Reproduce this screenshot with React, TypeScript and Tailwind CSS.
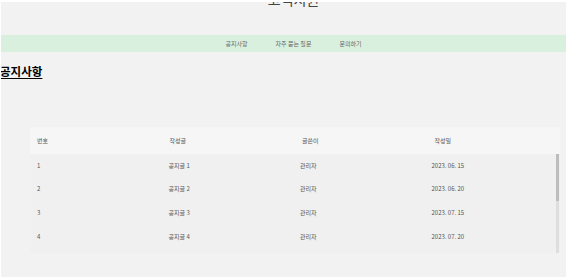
import React from "react";

const rows = [
  ["1", "공지글 1", "관리자", "2023. 06. 15"],
  ["2", "공지글 2", "관리자", "2023. 06. 20"],
  ["3", "공지글 3", "관리자", "2023. 07. 15"],
  ["4", "공지글 4", "관리자", "2023. 07. 20"],
  ["5", "공지글 5", "관리자", "2023. 08. 15"],
  ["6", "공지글 6", "관리자", "2023. 08. 20"],
  ["7", "공지글 7", "관리자", "2023. 09. 15"],
  ["8", "공지글 8", "관리자", "2023. 09. 20"],
];

export default function App() {
  return (
    <div
      className="w-[569px] h-[280px] bg-white overflow-hidden"
      style={{ fontFamily: '"Noto Sans CJK KR", "Noto Sans", sans-serif' }}
    >
      <div className="ml-[1px] mt-[2px] w-[565px] h-[275px] bg-[#f2f2f2] overflow-hidden flow-root">
        <div className="h-[33px] flow-root">
          <div className="mt-[-10px] text-center text-[14px] leading-[14px] text-[#444] pl-[20px]">
            고객지원
          </div>
        </div>
        <nav className="h-[17px] bg-[#d9f0df] flex justify-center items-center gap-[28px] pl-[20px] text-[6px] leading-[6px] text-[#666]">
          <span>공지사항</span>
          <span>자주 묻는 질문</span>
          <span>문의하기</span>
        </nav>
        <h2 className="mt-[14px] -ml-[1px] text-[11.5px] leading-[11px] font-bold text-black underline underline-offset-[2px]">
          공지사항
        </h2>
        <div className="mt-[50px] ml-[29px] w-[530px] relative">
          <div className="h-[27px] bg-[#f6f6f6] grid grid-cols-4 items-center text-[6px] leading-[6px] text-[#555]">
            <div className="pl-[7px]">번호</div>
            <div className="pl-[7px]">작성글</div>
            <div className="pl-[7px]">글쓴이</div>
            <div className="pl-[7px]">작성일</div>
          </div>
          <div className="h-[99px] overflow-hidden bg-[#f0f0f0] relative">
            <div className="pr-[4px]">
              {rows.map((r) => (
                <div
                  key={r[0]}
                  className="h-[23.6px] grid grid-cols-4 items-center text-[6px] leading-[6px] text-[#555]"
                >
                  {r.map((c, i) => (
                    <div key={i} className="pl-[7px]">
                      {c}
                    </div>
                  ))}
                </div>
              ))}
            </div>
            <div className="absolute right-[1px] top-0 w-[3px] h-full bg-[#dedede]">
              <div className="h-[47px] bg-[#bdbdbd]" />
            </div>
          </div>
        </div>
      </div>
    </div>
  );
}
